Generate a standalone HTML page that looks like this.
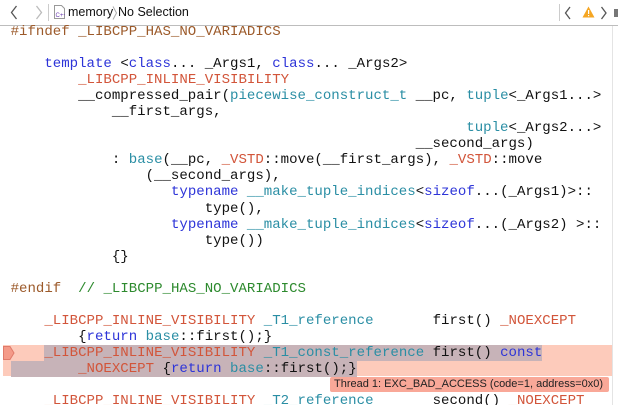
<!DOCTYPE html>
<html><head><meta charset="utf-8"><style>
html,body{margin:0;padding:0;width:618px;height:405px;overflow:hidden;background:#fff;position:relative}
.hdr{position:absolute;left:0;top:0;width:618px;height:25px;border-bottom:1px solid #bdbdbd;font-family:"Liberation Sans",sans-serif;font-size:12.5px;color:#111}
.hdr span{position:absolute;top:5px}
.hdr svg{position:absolute}
pre{position:absolute;left:10.6px;top:24px;margin:0;font-family:"Liberation Mono",monospace;font-size:14.07px;line-height:16.05px;color:#111;z-index:2}
.k{color:#2d34d8}.m{color:#d2553a}.p{color:#9c5a2a}.t{color:#2a8ea4}.c{color:#2d8a2e}
.sel{background:#c7b3b8}
.band{position:absolute;left:3px;width:609px;top:345px;height:31px;background:#fdcbbb}
.thr{position:absolute;left:330px;top:377px;width:279px;height:15px;background:#f9a898;font-family:"Liberation Sans",sans-serif;font-size:11px;line-height:15px;color:#222;padding-left:4px;box-sizing:border-box;border-radius:2px}
</style></head><body>
<div class="hdr">
<svg style="left:10px;top:5px" width="8" height="15"><path d="M6.5 1L1.5 7.5L6.5 14" fill="none" stroke="#555" stroke-width="1.3"/></svg>
<svg style="left:35px;top:5px" width="8" height="15"><path d="M1.5 1L6.5 7.5L1.5 14" fill="none" stroke="#bbb" stroke-width="1.3"/></svg>
<div style="position:absolute;left:48px;top:4px;width:1px;height:17px;background:#ccc"></div>
<svg style="left:54px;top:5px" width="11" height="14"><path d="M0.5 0.5h7l3 3v10h-10z" fill="#fff" stroke="#999"/><text x="1.5" y="12" font-size="6" font-family="Liberation Sans" fill="#6a3ab0">C++</text></svg>
<span style="left:68px">memory</span>
<svg style="left:112px;top:6px" width="6" height="14"><path d="M1 0.5L4.5 7L1 13.5" fill="none" stroke="#aaa" stroke-width="1"/></svg>
<span style="left:118px">No Selection</span>
<div style="position:absolute;left:559px;top:4px;width:1px;height:17px;background:#ccc"></div>
<svg style="left:564px;top:6px" width="8" height="14"><path d="M6 1L1.5 7L6 13" fill="none" stroke="#555" stroke-width="1.3"/></svg>
<svg style="left:582px;top:6px" width="13" height="12"><path d="M6.5 0.5L12.5 11.5H0.5Z" fill="#f5a623"/><rect x="6" y="4" width="1.2" height="4" fill="#fff"/><rect x="6" y="9" width="1.2" height="1.2" fill="#fff"/></svg>
<svg style="left:600px;top:6px" width="8" height="14"><path d="M1.5 1L6 7L1.5 13" fill="none" stroke="#555" stroke-width="1.3"/></svg>
<div style="position:absolute;left:614px;top:9px;width:4px;height:8px;background:#777"></div>
</div>
<div style="position:absolute;left:612px;top:26px;width:1px;height:379px;background:#e4e4e4"></div>
<div class="band"></div>
<svg style="position:absolute;left:3px;top:346px" width="12" height="14"><path d="M0.5 0.5H7L11 7L7 13.5H0.5Z" fill="#f49a88" stroke="#e07a6a"/></svg>
<div class="thr">Thread 1: EXC_BAD_ACCESS (code=1, address=0x0)</div>
<pre><span class="p">#ifndef _LIBCPP_HAS_NO_VARIADICS</span>

    <span class="k">template</span> &lt;<span class="k">class</span>... _Args1, <span class="k">class</span>... _Args2&gt;
        <span class="m">_LIBCPP_INLINE_VISIBILITY</span>
        __compressed_pair(<span class="t">piecewise_construct_t</span> __pc, <span class="t">tuple</span>&lt;_Args1...&gt;
            __first_args,
                                                      <span class="t">tuple</span>&lt;_Args2...&gt;
                                                __second_args)
            : <span class="t">base</span>(__pc, <span class="m">_VSTD</span>::move(__first_args), <span class="m">_VSTD</span>::move
                (__second_args),
                   <span class="k">typename</span> <span class="t">__make_tuple_indices</span>&lt;<span class="k">sizeof</span>...(_Args1)&gt;::
                       type(),
                   <span class="k">typename</span> <span class="t">__make_tuple_indices</span>&lt;<span class="k">sizeof</span>...(_Args2) &gt;::
                       type())
            {}

<span class="p">#endif</span>  <span class="c">// _LIBCPP_HAS_NO_VARIADICS</span>

    <span class="m">_LIBCPP_INLINE_VISIBILITY</span> <span class="t">_T1_reference</span>       first() <span class="m">_NOEXCEPT</span>
        {<span class="k">return</span> <span class="t">base</span>::first();}
    <span class="sel"><span class="m">_LIBCPP_INLINE_VISIBILITY</span> <span class="t">_T1_const_reference</span> first() <span class="k">const</span></span>
<span class="sel">        <span class="m">_NOEXCEPT</span> {<span class="k">return</span> <span class="t">base</span>::first();}</span>

    <span class="m">_LIBCPP_INLINE_VISIBILITY</span> <span class="t">_T2_reference</span>       second() <span class="m">_NOEXCEPT</span>
</pre>
</body></html>
